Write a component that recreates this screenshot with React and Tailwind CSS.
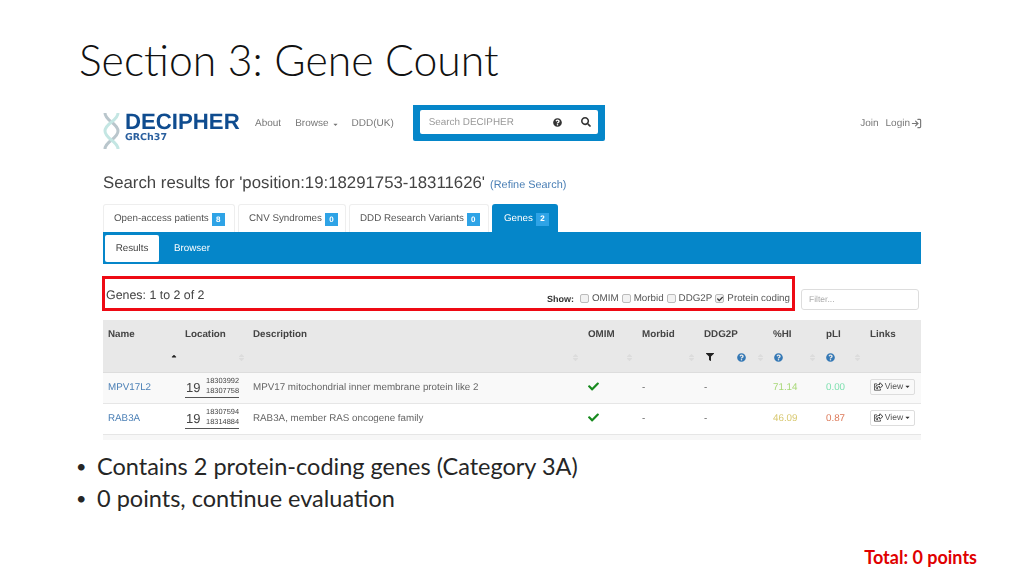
import React from 'react';
import { FaCheck, FaFilter, FaQuestionCircle, FaSearch, FaSort, FaSortUp, FaRegShareSquare, FaCaretDown } from 'react-icons/fa';
import { LogIn } from 'lucide-react';

const Badge = ({ children }) => (
  <span className="inline-flex items-center justify-center w-[13px] h-[13px] ml-[3px] bg-[#2ea3e6] text-white text-[8px] font-bold">
    {children}
  </span>
);

const Sort = () => <FaSort className="text-[#dcdcdc] text-[9px]" />;
const Help = () => <FaQuestionCircle className="text-[#3478b5] text-[9px]" />;

const Helix = () => (
  <svg width="17" height="38" viewBox="0 0 17 38" fill="none" className="shrink-0 mt-[7px] ml-[1px]">
    <path d="M2 1 C2 9 15 11 15 19 C15 27 2 29 2 37" stroke="#b9c6cc" strokeWidth="3" />
    <path d="M15 1 C15 9 2 11 2 19 C2 27 15 29 15 37" stroke="#c4e6e3" strokeWidth="3" />
  </svg>
);

const Tab = ({ label, count, active, width }) => (
  <div
    className={`flex items-center h-[28px] pt-[2px] mr-[3px] rounded-t-[3px] text-[9.8px] ${width} ${
      active ? 'pl-[12px] bg-[#0586c9] text-white' : 'pl-[10px] border border-b-0 border-[#eeeeee] text-[#555555]'
    }`}
  >
    {label}
    <Badge>{count}</Badge>
  </div>
);

const Check = ({ label, checked }) => (
  <span className="flex items-center ml-[3px]">
    <span className="flex items-center justify-center w-[9px] h-[9px] mr-[3px] -mt-[2px] rounded-[2px] border border-[#bbbbbb] bg-[#f2f2f2] text-[#333333]">
      {checked && <FaCheck className="text-[6px]" />}
    </span>
    {label}
  </span>
);

const Location = ({ start, end }) => (
  <div className="flex items-center justify-between w-[54px] h-[23px] -mt-[3px] border-b border-[#555555] text-[#444444]">
    <span className="text-[13px] leading-none mt-[3px] ml-[1px]">19</span>
    <span className="flex flex-col items-end text-[7.4px] leading-[10px]">
      <span>{start}</span>
      <span>{end}</span>
    </span>
  </div>
);

const headers = ['Name', 'Location', 'Description', 'OMIM', 'Morbid', 'DDG2P', '%HI', 'pLI', 'Links'];

const rows = [
  { name: 'MPV17L2', start: '18303992', end: '18307758', desc: 'MPV17 mitochondrial inner membrane protein like 2', hi: '71.14', hiColor: 'text-[#a8d878]', pli: '0.00', pliColor: 'text-[#7fe0b0]', bg: 'bg-[#f9f9f9]' },
  { name: 'RAB3A', start: '18307594', end: '18314884', desc: 'RAB3A, member RAS oncogene family', hi: '46.09', hiColor: 'text-[#d8c870]', pli: '0.87', pliColor: 'text-[#dd7a5a]', bg: 'bg-white' },
];

const gridCols = 'grid grid-cols-[77px_68px_335px_54px_62px_69px_53px_44px_56px]';

const App = () => (
  <div className="w-[1024px] h-[576px] bg-white overflow-hidden flex flex-col font-['Liberation_Sans',sans-serif]">
    <h1 className="pl-[79px] pt-[35px] h-[105px] text-[42.7px] leading-[50px] font-light text-[#111111] font-['Lato',sans-serif]">
      Section 3: Gene Count
    </h1>

    <div className="ml-[102px] w-[820px] flex flex-col blur-[0.35px] [text-rendering:geometricPrecision]">
      {/* Site nav */}
      <div className="flex h-[46px]">
        <Helix />
        <div className="flex flex-col ml-[5px] w-[128px]">
          <span className="text-[22.2px] leading-[22px] mt-[6px] font-bold text-[#0f4c8f]">DECIPHER</span>
          <span className="text-[9.5px] leading-[9px] font-bold text-[#2a5f9e] font-['DejaVu_Sans',sans-serif]">GRCh37</span>
        </div>
        <div className="flex items-start pt-[13px] pl-[2px] text-[10px] leading-[12px] text-[#777777]">
          <span>About</span>
          <span className="flex items-center ml-[14px]">Browse<FaCaretDown className="ml-[3px] text-[7px]" /></span>
          <span className="ml-[13px]">DDD(UK)</span>
        </div>
        <div className="flex items-start h-[36px] w-[192px] ml-[19px] p-[5px_7px] bg-[#0586c9] rounded-b-[2px]">
          <div className="flex items-center w-full h-[24px] pl-[9px] pr-[7px] bg-white rounded-[2px] text-[9.9px] text-[#999999]">
            <span className="mt-[3px]">Search DECIPHER</span>
            <FaQuestionCircle className="ml-auto text-[#333333] text-[9px]" />
            <FaSearch className="ml-[19px] text-[#333333] text-[10px]" />
          </div>
        </div>
        <div className="flex items-start ml-auto pt-[13px] text-[10px] leading-[12px] text-[#777777]">
          <span>Join</span>
          <span className="flex items-center ml-[7px]">Login<LogIn size={11} strokeWidth={2.5} className="ml-[1px] -mt-[1px]" /></span>
        </div>
      </div>

      {/* Search heading */}
      <div className="flex items-baseline h-[53px] pt-[22px] pl-[1px] text-[#444444]">
        <span className="text-[16.8px] leading-[20px]">Search results for 'position:19:18291753-18311626'</span>
        <span className="ml-[5px] text-[10.9px] text-[#4a7fb5]">(Refine Search)</span>
      </div>

      {/* Tabs */}
      <div className="flex pl-[1px]">
        <Tab label="Open-access patients" count="8" width="w-[132px]" />
        <Tab label="CNV Syndromes" count="0" width="w-[108px]" />
        <Tab label="DDD Research Variants" count="0" width="w-[140px]" />
        <Tab label="Genes" count="2" width="w-[66px]" active />
      </div>
      <div className="flex items-center h-[32px] ml-[1px] w-[818px] pl-[2px] bg-[#0586c9] text-[9.8px]">
        <span className="flex items-center justify-center w-[54px] h-[27px] pt-[3px] bg-white rounded-[2px] text-[#444444]">Results</span>
        <span className="ml-[15px] mt-[3px] text-white">Browser</span>
      </div>

      {/* Highlighted filter row */}
      <div className="flex items-end mt-[12px] h-[35px]">
        <div className="flex items-center justify-between w-[693px] h-[35px] pl-[1px] pr-[2px] border-[3px] border-[#ee0a14]">
          <span className="text-[12.4px] text-[#444444] mt-[4px]">Genes: 1 to 2 of 2</span>
          <div className="flex items-center mt-[12px] text-[9.8px] text-[#555555]">
            <span className="mr-[3px] text-[9px] font-bold text-[#333333]">Show:</span>
            <Check label="OMIM" />
            <Check label="Morbid" />
            <Check label="DDG2P" />
            <Check label="Protein coding" checked />
          </div>
        </div>
        <div className="flex items-center w-[118px] h-[21px] ml-[6px] mb-[1px] pl-[7px] border border-[#dddddd] rounded-[3px] text-[8.5px] text-[#aaaaaa]">
          Filter...
        </div>
      </div>

      {/* Gene table */}
      <div className="ml-[1px] w-[818px] mt-[9px] text-[9.8px]">
        <div className={`${gridCols} h-[53px] bg-[#e8e8e8] border-b border-[#dddddd]`}>
          {headers.map((h) => (
            <div key={h} className="pl-[5px] pt-[8px] font-bold text-[#444444]">{h}</div>
          ))}
          <div className="flex items-center justify-end pr-[2px] h-[14px]"><FaSortUp className="text-[#222222] text-[8px] mt-[2px]" /></div>
          <div className="flex items-center justify-end pr-[2px] h-[14px]"><Sort /></div>
          <div className="flex items-center justify-end pr-[3px] h-[14px]"><Sort /></div>
          <div className="flex items-center justify-end pr-[3px] h-[14px]"><Sort /></div>
          <div className="flex items-center justify-end pr-[3px] h-[14px]"><Sort /></div>
          <div className="flex items-center pl-[7px] pr-[3px] h-[14px]">
            <FaFilter className="text-[#222222] text-[8px]" />
            <span className="ml-auto"><Help /></span>
            <span className="ml-[10px]"><Sort /></span>
          </div>
          <div className="flex items-center justify-between pl-[6px] pr-[4px] h-[14px]"><Help /><Sort /></div>
          <div className="flex items-center justify-between pl-[5px] pr-[3px] h-[14px]"><Help /><Sort /></div>
          <div />
        </div>

        {rows.map((r) => (
          <div key={r.name} className={`${gridCols} h-[31px] items-center border-b border-[#e6e6e6] text-[#666666] ${r.bg}`}>
            <div className="pl-[5px] text-[#4a7fb5]">{r.name}</div>
            <div className="pl-[5px]"><Location start={r.start} end={r.end} /></div>
            <div className="pl-[5px]">{r.desc}</div>
            <div className="pl-[5px] -mt-[4px]"><FaCheck className="text-[#178a1e] text-[11px]" /></div>
            <div className="pl-[5px]">-</div>
            <div className="pl-[5px]">-</div>
            <div className={`pl-[5px] ${r.hiColor}`}>{r.hi}</div>
            <div className={`pl-[5px] ${r.pliColor}`}>{r.pli}</div>
            <div className="pl-[5px] -mt-[3px]">
              <span className="flex items-center justify-center w-[45px] h-[16px] border border-[#dddddd] rounded-[2px] text-[8.6px] text-[#555555]">
                <FaRegShareSquare className="text-[9px] mr-[2px] text-[#333333]" />View<FaCaretDown className="ml-[1px] text-[7px] text-[#333333]" />
              </span>
            </div>
          </div>
        ))}
        <div className="h-[5px] bg-[#f7f7f7]" />
      </div>
    </div>

    {/* Slide bullets */}
    <ul className="pl-[76px] mt-[10px] text-[23.5px] leading-[32px] text-[#262626] font-['Lato',sans-serif]">
      <li className="flex"><span className="w-[21px] text-[18px]">•</span>Contains 2 protein-coding genes (Category 3A)</li>
      <li className="flex"><span className="w-[21px] text-[18px]">•</span>0 points, continue evaluation</li>
    </ul>

    <div className="flex justify-end pr-[47px] mt-auto pb-[7px] text-[18px] leading-[24px] font-bold text-[#e00000] font-['Lato',sans-serif]">
      Total: 0 points
    </div>
  </div>
);

export default App;
